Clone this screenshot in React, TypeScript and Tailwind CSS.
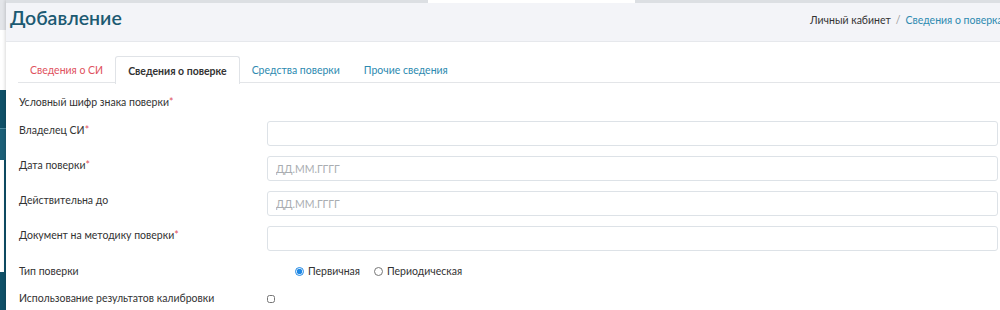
import React from 'react'

const tabs = [
  { label: 'Сведения о СИ', tone: 'text-[#e0525e]' },
  { label: 'Сведения о поверке', tone: 'text-[#333] font-bold', active: true },
  { label: 'Средства поверки', tone: 'text-[#2d8ab0]' },
  { label: 'Прочие сведения', tone: 'text-[#2d8ab0]' },
]

function Req() {
  return <span className="text-[#e0525e]">*</span>
}

function Field({ label, required, placeholder }: { label: string; required?: boolean; placeholder?: string }) {
  return (
    <div className="flex items-start h-[35px]">
      <div className="w-[248px] shrink-0 pt-[2px]">
        {label}
        {required && <Req />}
      </div>
      <input
        className="flex-1 h-[25px] border border-[#dde2e7] rounded-[3px] px-2 text-[10.5px] placeholder:text-[#a9adb1] outline-none"
        placeholder={placeholder}
      />
    </div>
  )
}

export default function App() {
  return (
    <div className="w-[1000px] h-[310px] overflow-hidden flex bg-white text-[10.5px] text-[#333] font-['Lato',sans-serif]">
      {/* sidebar peeking out on the left */}
      <div className="w-[6px] flex flex-col shrink-0">
        <div className="h-[30px] bg-[#e3e5e9]" />
        <div className="h-[60px] bg-white" />
        <div className="h-[38px] bg-[#0f5068]" />
        <div className="h-[32px] bg-[#1b5f77] border-t border-[#4c8aa0]" />
        <div className="h-[112px] bg-white border-r-2 border-[#0f5068]" />
        <div className="flex-1 bg-[#0f5068]" />
      </div>

      <div className="flex-1 min-w-0 shadow-[-1px_0_3px_rgba(0,0,0,0.15)]">
        {/* top bar remnant */}
        <div className="h-[3px] flex">
          <div className="w-[422px] bg-[#dcdfe3]" />
          <div className="w-[207px] bg-white" />
          <div className="flex-1 bg-[#dcdfe3]" />
        </div>
        <div className="h-[39px] bg-[#f3f4f8] border-b border-[#e6e8ec] grid grid-cols-[800px_1fr] items-start pl-[4px]">
          <h1 className="text-[19.5px] font-semibold text-[#1c5a72] leading-none mt-[5px]">Добавление</h1>
          <div className="mt-[10px] whitespace-nowrap text-[10.5px]">
            <span className="text-[#333]">Личный кабинет</span>
            <span className="text-[#999] mx-[5px]">/</span>
            <span className="text-[#2d8ab0]">Сведения о поверках</span>
          </div>
        </div>

        <div className="pl-[12px] pt-[14px]">
          <div className="flex border-b border-[#e3e5e8] h-[27px]">
            {tabs.map((t) =>
              t.active ? (
                <div key={t.label} className={`px-[12px] pt-[7px] bg-white border border-b-0 border-[#e0e3e7] rounded-t-[3px] -mb-px h-[28px] ${t.tone}`}>
                  {t.label}
                </div>
              ) : (
                <div key={t.label} className={`px-[12px] pt-[7px] ${t.tone}`}>
                  {t.label}
                </div>
              )
            )}
          </div>

          <div className="pr-[2px] pl-[1px]">
            <div className="pt-[12px] h-[38px]">
              Условный шифр знака поверки<Req />
            </div>
            <Field label="Владелец СИ" required />
            <Field label="Дата поверки" required placeholder="ДД.ММ.ГГГГ" />
            <Field label="Действительна до" placeholder="ДД.ММ.ГГГГ" />
            <Field label="Документ на методику поверки" required />
            <div className="flex items-center h-[21px]">
              <div className="w-[276px] shrink-0">Тип поверки</div>
              <label className="flex items-center gap-[4px] mr-[14px]">
                <input type="radio" name="kind" defaultChecked className="w-[9px] h-[9px] m-0 accent-[#1e88e5]" />
                Первичная
              </label>
              <label className="flex items-center gap-[4px]">
                <input type="radio" name="kind" className="w-[9px] h-[9px] m-0" />
                Периодическая
              </label>
            </div>
            <div className="flex items-center h-[33px]">
              <div className="w-[248px] shrink-0">Использование результатов калибровки</div>
              <input type="checkbox" className="w-[8px] h-[8px] m-0" />
            </div>
          </div>
        </div>
      </div>
    </div>
  )
}
